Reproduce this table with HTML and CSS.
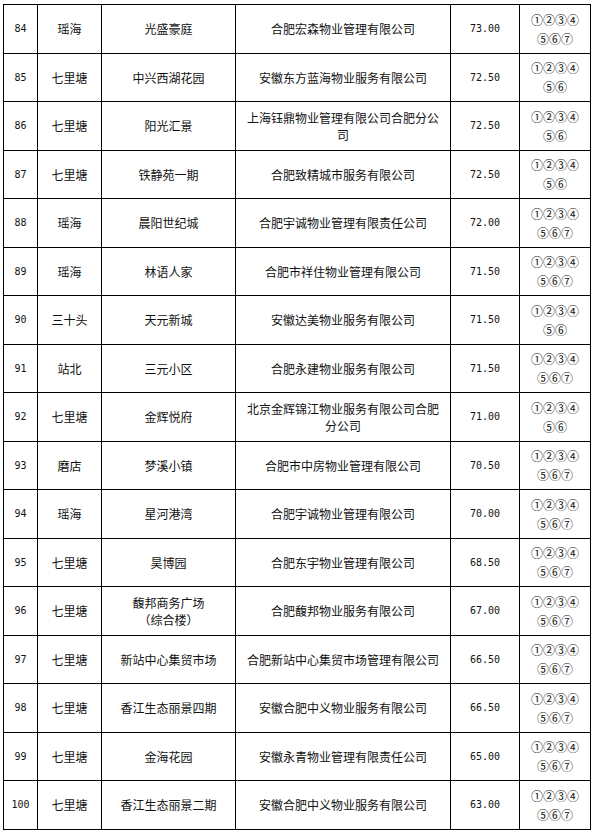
FILE: index.html
```html
<!DOCTYPE html>
<html lang="zh-CN">
<head>
<meta charset="utf-8">
<title>物业服务评分表</title>
<link rel="stylesheet" href="styles.css">
</head>
<body>
<table class="sheet">
  <colgroup>
    <col class="c-no"><col class="c-area"><col class="c-name"><col class="c-co"><col class="c-score"><col class="c-items">
  </colgroup>
  <tbody>
    <tr><td class="num">84</td><td>瑶海</td><td>光盛豪庭</td><td>合肥宏森物业管理有限公司</td><td class="num">73.00</td><td class="items">①②③④<br>⑤⑥⑦</td></tr>
    <tr><td class="num">85</td><td>七里塘</td><td>中兴西湖花园</td><td>安徽东方蓝海物业服务有限公司</td><td class="num">72.50</td><td class="items">①②③④<br>⑤⑥</td></tr>
    <tr><td class="num">86</td><td>七里塘</td><td>阳光汇景</td><td>上海钰鼎物业管理有限公司合肥分公<br>司</td><td class="num">72.50</td><td class="items">①②③④<br>⑤⑥</td></tr>
    <tr><td class="num">87</td><td>七里塘</td><td>铁静苑一期</td><td>合肥致精城市服务有限公司</td><td class="num">72.50</td><td class="items">①②③④<br>⑤⑥</td></tr>
    <tr><td class="num">88</td><td>瑶海</td><td>晨阳世纪城</td><td>合肥宇诚物业管理有限责任公司</td><td class="num">72.00</td><td class="items">①②③④<br>⑤⑥⑦</td></tr>
    <tr><td class="num">89</td><td>瑶海</td><td>林语人家</td><td>合肥市祥住物业管理有限公司</td><td class="num">71.50</td><td class="items">①②③④<br>⑤⑥⑦</td></tr>
    <tr><td class="num">90</td><td>三十头</td><td>天元新城</td><td>安徽达美物业服务有限公司</td><td class="num">71.50</td><td class="items">①②③④<br>⑤⑥</td></tr>
    <tr><td class="num">91</td><td>站北</td><td>三元小区</td><td>合肥永建物业服务有限公司</td><td class="num">71.50</td><td class="items">①②③④<br>⑤⑥⑦</td></tr>
    <tr><td class="num">92</td><td>七里塘</td><td>金辉悦府</td><td>北京金辉锦江物业服务有限公司合肥<br>分公司</td><td class="num">71.00</td><td class="items">①②③④<br>⑤⑥</td></tr>
    <tr><td class="num">93</td><td>磨店</td><td>梦溪小镇</td><td>合肥市中房物业管理有限公司</td><td class="num">70.50</td><td class="items">①②③④<br>⑤⑥⑦</td></tr>
    <tr><td class="num">94</td><td>瑶海</td><td>星河港湾</td><td>合肥宇诚物业管理有限公司</td><td class="num">70.00</td><td class="items">①②③④<br>⑤⑥⑦</td></tr>
    <tr><td class="num">95</td><td>七里塘</td><td>昊博园</td><td>合肥东宇物业管理有限公司</td><td class="num">68.50</td><td class="items">①②③④<br>⑤⑥⑦</td></tr>
    <tr><td class="num">96</td><td>七里塘</td><td>馥邦商务广场<br>（综合楼）</td><td>合肥馥邦物业服务有限公司</td><td class="num">67.00</td><td class="items">①②③④<br>⑤⑥⑦</td></tr>
    <tr><td class="num">97</td><td>七里塘</td><td>新站中心集贸市场</td><td>合肥新站中心集贸市场管理有限公司</td><td class="num">66.50</td><td class="items">①②③④<br>⑤⑥⑦</td></tr>
    <tr><td class="num">98</td><td>七里塘</td><td>香江生态丽景四期</td><td>安徽合肥中义物业服务有限公司</td><td class="num">66.50</td><td class="items">①②③④<br>⑤⑥⑦</td></tr>
    <tr><td class="num">99</td><td>七里塘</td><td>金海花园</td><td>安徽永青物业管理有限责任公司</td><td class="num">65.00</td><td class="items">①②③④<br>⑤⑥⑦</td></tr>
    <tr><td class="num">100</td><td>七里塘</td><td>香江生态丽景二期</td><td>安徽合肥中义物业服务有限公司</td><td class="num">63.00</td><td class="items">①②③④<br>⑤⑥⑦</td></tr>
  </tbody>
</table>
</body>
</html>
```

FILE: styles.css
```css
html, body {
  margin: 0;
  padding: 0;
  background: #ffffff;
}

body {
  padding: 4px 0 0 3px;
  font-family: "Noto Sans CJK SC", "Noto Sans", sans-serif;
  font-size: 12px;
  color: #111111;
}

.sheet {
  border-collapse: collapse;
  table-layout: fixed;
  width: 587px;
}

.c-no { width: 34px; }
.c-area { width: 64px; }
.c-name { width: 134px; }
.c-co { width: 215px; }
.c-score { width: 69px; }
.c-items { width: 71px; }

.sheet td {
  border: 1px solid #000000;
  height: 47.5px;
  padding: 0 4px;
  text-align: center;
  vertical-align: middle;
  line-height: 17px;
  white-space: nowrap;
}

.sheet td.num {
  font-family: "DejaVu Sans Mono", "Liberation Mono", monospace;
  font-size: 10px;
  padding: 0 2px;
}

.sheet td.items {
  line-height: 19px;
  padding: 0;
}
```
